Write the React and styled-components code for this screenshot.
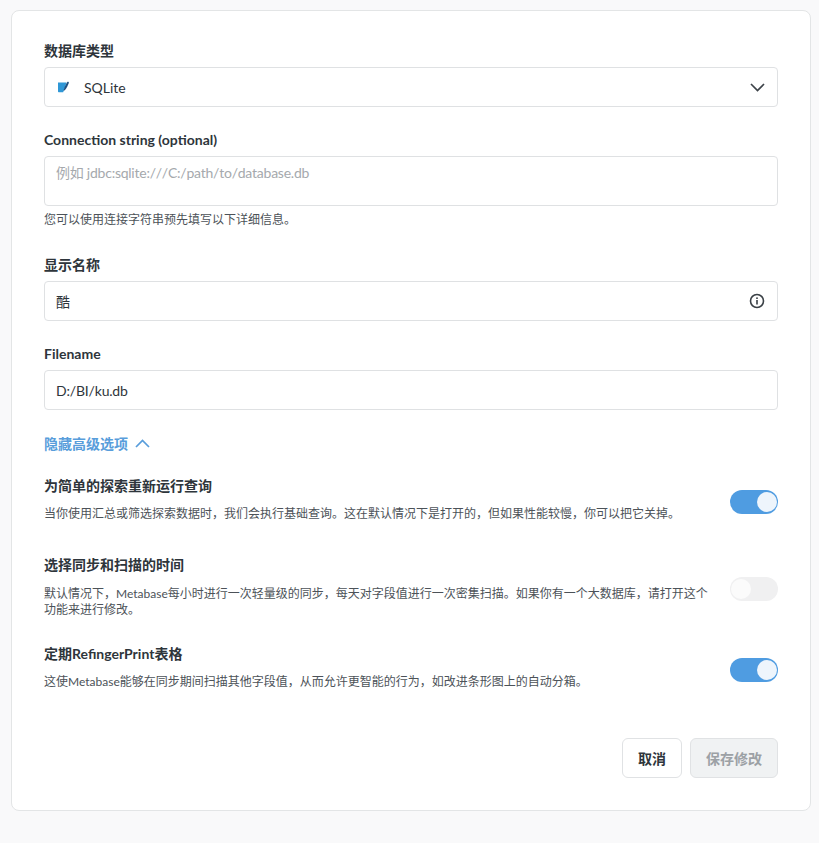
import React from "react";
import styled, { createGlobalStyle } from "styled-components";

const FONT = `Lato, "Noto Sans CJK SC", sans-serif`;

const Global = createGlobalStyle`
  html, body { margin: 0; padding: 0; background: #f9f9fa; }
  body { font-family: ${FONT}; color: #2e353b; }
  * { box-sizing: border-box; }
`;

const Page = styled.div`
  width: 819px;
  height: 843px;
  padding: 10px 8px 0 11px;
`;

const Card = styled.form`
  width: 800px;
  height: 801px;
  background: #fff;
  border: 1px solid #e3e5e6;
  border-radius: 8px;
  padding: 31px 32px 0;
  display: flex;
  flex-direction: column;
`;

const Field = styled.div`
  margin-bottom: ${(p) => p.$mb ?? 24}px;
`;

const Label = styled.label`
  display: block;
  font-size: 14px;
  line-height: 17px;
  font-weight: 700;
  color: #2e353b;
  margin-bottom: 8px;
`;

const Box = styled.div`
  height: ${(p) => p.$h ?? 40}px;
  border: 1px solid #dfe1e3;
  border-radius: 4px;
  background: #fff;
  display: flex;
  align-items: ${(p) => (p.$top ? "flex-start" : "center")};
  justify-content: space-between;
  padding: ${(p) => (p.$top ? "7px 12px 7px 11px" : "0 12px 0 11px")};
  font-size: 14px;
  line-height: 17px;
  color: #2e353b;
`;

const Placeholder = styled.span`
  color: #a5a9ad;
  font-kerning: none;
  letter-spacing: -0.24px;
`;

const InputValue = styled.span`
  letter-spacing: -0.18px;
`;

const SelectValue = styled.span`
  display: flex;
  align-items: center;
  gap: 14px;
  padding-left: 1px;
`;

const Help = styled.div`
  font-size: 12px;
  line-height: 16px;
  color: #4c5258;
  margin-top: 6px;
`;

const AdvancedLink = styled.div`
  display: flex;
  align-items: center;
  gap: 7px;
  font-size: 14px;
  line-height: 17px;
  font-weight: 700;
  color: #589ddb;
  margin: 1px 0 25px;
`;

const SettingRow = styled.div`
  display: flex;
  align-items: center;
  justify-content: space-between;
  margin-bottom: ${(p) => p.$mb}px;
`;

const SettingText = styled.div`
  width: 672px;
`;

const SettingTitle = styled.div`
  font-size: 14px;
  line-height: 17px;
  font-weight: 700;
  color: #2e353b;
  margin-bottom: ${(p) => p.$mb ?? 12}px;
`;

const SettingDesc = styled.div`
  font-size: 12px;
  line-height: 16px;
  color: #4c5258;
`;

const Toggle = styled.div`
  position: relative;
  width: 48px;
  height: 24px;
  margin-top: 4px;
  border-radius: 12px;
  flex: none;
  background: ${(p) => (p.$on ? "#4f9ce1" : "#f0f0f1")};
`;

const Knob = styled.span`
  position: absolute;
  top: 2px;
  left: ${(p) => (p.$on ? "27px" : "1px")};
  width: 20px;
  height: 20px;
  border-radius: 50%;
  background: ${(p) => (p.$on ? "#eef5fc" : "#fbfbfb")};
`;

const Footer = styled.div`
  display: flex;
  justify-content: flex-end;
  gap: 8px;
  margin-top: 48px;
`;

const Button = styled.button`
  height: 40px;
  padding: 0;
  width: ${(p) => (p.$primary ? 88 : 60)}px;
  border-radius: 6px;
  border: 1px solid #e0e2e4;
  background: ${(p) => (p.$primary ? "#f0f2f3" : "#fff")};
  color: ${(p) => (p.$primary ? "#9ca1a5" : "#2e353b")};
  font-family: ${FONT};
  font-size: 14px;
  font-weight: 700;
`;

const SqliteIcon = () => (
  <svg width="13" height="13" viewBox="0 0 13 13">
    <path d="M1 1.500h8.500c-.8 2.800-2 6-3.300 9.800H2c-.6 0-1-.4-1-1z" fill="#2f97d6" />
    <path d="M10.300 1c.8-.5 1.800.2 1.500 1.100-.9 2.500-2.200 5-3.800 7l-1.400.8.300-1.600c.8-2.600 2-5.200 3.400-7.300z" fill="#1f4f7f" />
  </svg>
);

const Chevron = ({ up, color }) => (
  <svg width="15" height="9" viewBox="0 0 15 9" fill="none">
    <path d={up ? "M1 8l6.500-6.500L14 8" : "M1 1l6.500 6.500L14 1"} stroke={color} strokeWidth="1.700" />
  </svg>
);

const InfoIcon = () => (
  <svg width="16" height="16" viewBox="0 0 16 16" fill="none">
    <circle cx="8" cy="8" r="6.500" stroke="#3a4046" strokeWidth="1.600" />
    <rect x="7.200" y="7" width="1.600" height="4.500" fill="#3a4046" />
    <rect x="7.200" y="4.400" width="1.600" height="1.600" fill="#3a4046" />
  </svg>
);

export default function App() {
  return (
    <Page>
      <Global />
      <Card>
        <Field>
          <Label>数据库类型</Label>
          <Box>
            <SelectValue>
              <SqliteIcon />
              SQLite
            </SelectValue>
            <Chevron color="#3d4349" />
          </Box>
        </Field>
        <Field $mb={28}>
          <Label>Connection string (optional)</Label>
          <Box $h={50} $top>
            <Placeholder>例如 jdbc:sqlite:///C:/path/to/database.db</Placeholder>
          </Box>
          <Help>您可以使用连接字符串预先填写以下详细信息。</Help>
        </Field>
        <Field>
          <Label>显示名称</Label>
          <Box>
            酷
            <InfoIcon />
          </Box>
        </Field>
        <Field>
          <Label>Filename</Label>
          <Box><InputValue>D:/BI/ku.db</InputValue></Box>
        </Field>
        <AdvancedLink>
          隐藏高级选项
          <Chevron up color="#589ddb" />
        </AdvancedLink>
        <SettingRow $mb={34}>
          <SettingText>
            <SettingTitle>为简单的探索重新运行查询</SettingTitle>
            <SettingDesc>当你使用汇总或筛选探索数据时，我们会执行基础查询。这在默认情况下是打开的，但如果性能较慢，你可以把它关掉。</SettingDesc>
          </SettingText>
          <Toggle $on><Knob $on /></Toggle>
        </SettingRow>
        <SettingRow $mb={27}>
          <SettingText>
            <SettingTitle $mb={13}>选择同步和扫描的时间</SettingTitle>
            <SettingDesc>默认情况下，Metabase每小时进行一次轻量级的同步，每天对字段值进行一次密集扫描。如果你有一个大数据库，请打开这个功能来进行修改。</SettingDesc>
          </SettingText>
          <Toggle><Knob /></Toggle>
        </SettingRow>
        <SettingRow $mb={0}>
          <SettingText>
            <SettingTitle>定期RefingerPrint表格</SettingTitle>
            <SettingDesc>这使Metabase能够在同步期间扫描其他字段值，从而允许更智能的行为，如改进条形图上的自动分箱。</SettingDesc>
          </SettingText>
          <Toggle $on><Knob $on /></Toggle>
        </SettingRow>
        <Footer>
          <Button type="button">取消</Button>
          <Button type="button" $primary>保存修改</Button>
        </Footer>
      </Card>
    </Page>
  );
}
